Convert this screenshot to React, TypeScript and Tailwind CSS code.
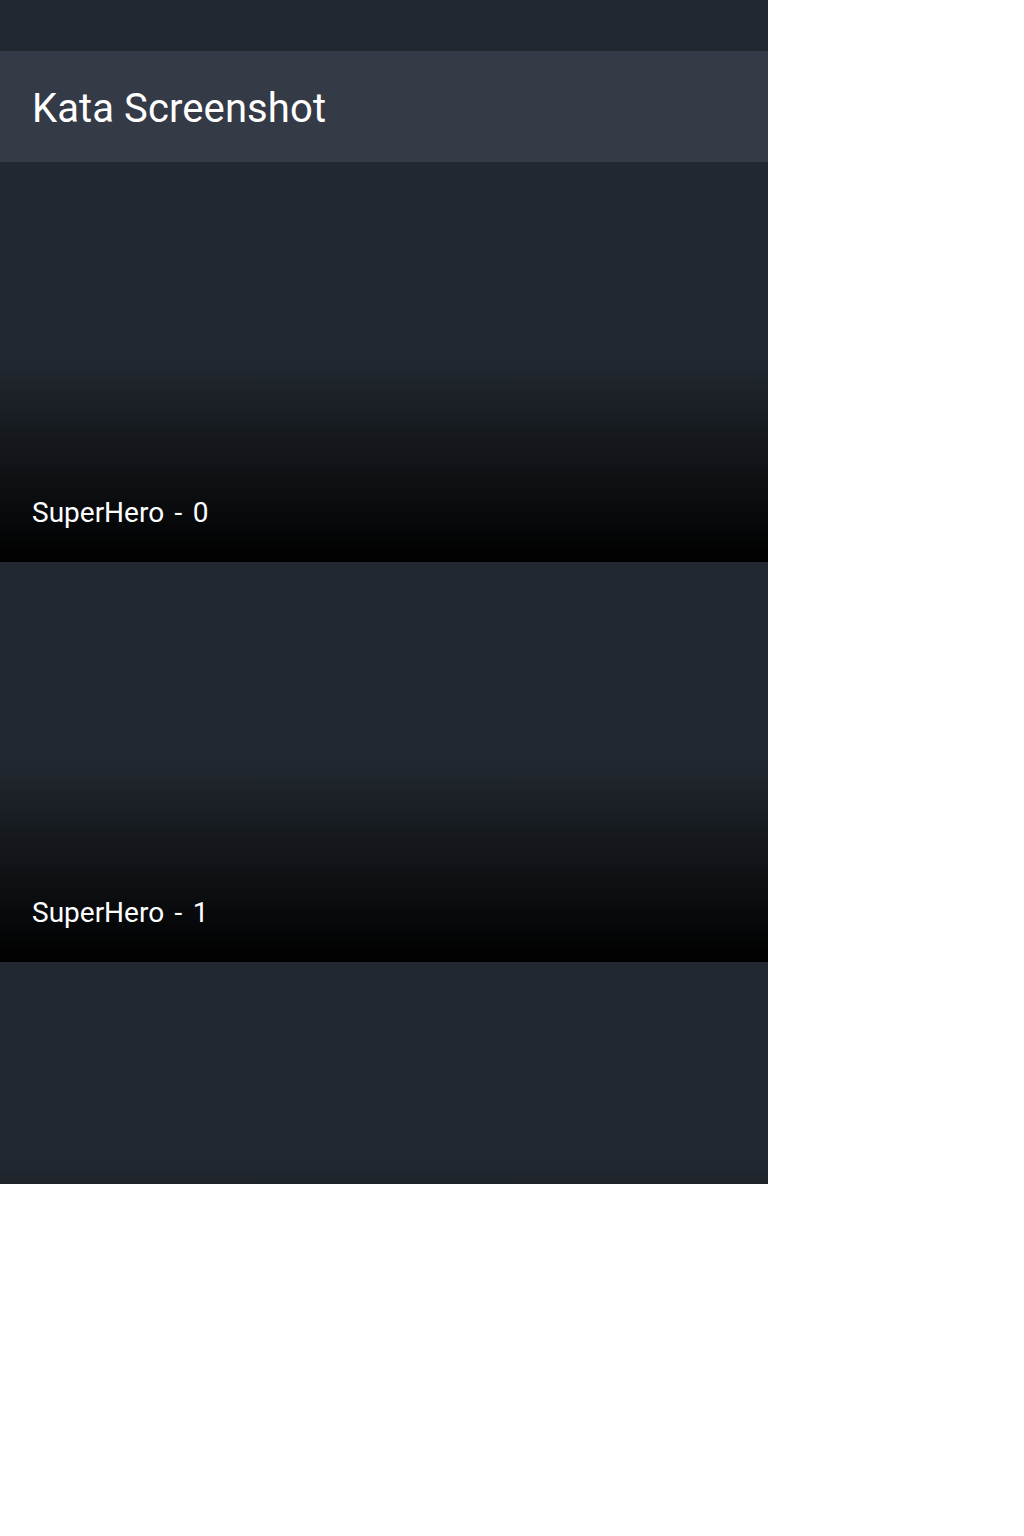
export default function App() {
  const items = [0, 1, 2];
  return (
    <div className="w-[768px] h-[1184px] overflow-hidden bg-[#222830]" style={{ fontFamily: "Roboto, 'Liberation Sans', sans-serif" }}>
      <div className="h-[51px] bg-[#222830]" />
      <div className="h-[111px] bg-[#343a46] flex items-center px-8 pt-1">
        <span className="text-[40px] text-white leading-none tracking-[0.1px]">Kata Screenshot</span>
      </div>
      {items.map((i) => (
        <div key={i} className="relative h-[400px] bg-[#222830] flex items-end shrink-0">
          <div className="absolute inset-x-0 bottom-0 h-[200px] bg-gradient-to-b from-transparent to-black" />
          <span className="relative text-[28px] text-white px-8 pb-[35px] leading-none [word-spacing:3.5px]">SuperHero - {i}</span>
        </div>
      ))}
    </div>
  );
}
